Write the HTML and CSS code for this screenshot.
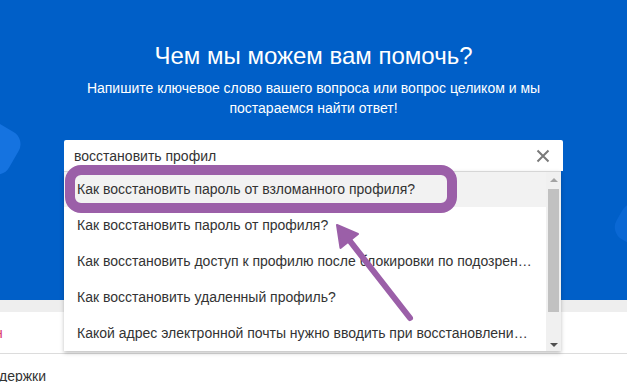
FILE: index.html
```html
<!DOCTYPE html>
<html lang="ru">
<head>
<meta charset="utf-8">
<title>Помощь</title>
<link rel="stylesheet" href="styles.css">
</head>
<body>
<div class="page">
  <section class="hero">
    <span class="blob blob-left"></span>
    <span class="blob blob-right"></span>
    <h1 class="hero-title">Чем мы можем вам помочь?</h1>
    <p class="hero-sub">Напишите ключевое слово вашего вопроса или вопрос целиком и мы<br>постараемся найти ответ!</p>
    <div class="search">
      <div class="search-field">
        <span class="search-text">восстановить профил</span>
        <svg class="search-clear" width="14" height="14" viewBox="0 0 14 14"><path d="M1.5 1.5L12.5 12.5M12.5 1.5L1.5 12.5" stroke="#7a7a7a" stroke-width="2" fill="none"/></svg>
      </div>
      <div class="suggest">
        <ul class="suggest-list">
          <li class="suggest-item active">Как восстановить пароль от взломанного профиля?</li>
          <li class="suggest-item">Как восстановить пароль от профиля?</li>
          <li class="suggest-item">Как восстановить доступ к профилю после блокировки по подозрен…</li>
          <li class="suggest-item">Как восстановить удаленный профиль?</li>
          <li class="suggest-item">Какой адрес электронной почты нужно вводить при восстановлени…</li>
        </ul>
        <div class="scrollbar">
          <span class="sb-arrow sb-up"></span>
          <span class="sb-thumb"></span>
          <span class="sb-arrow sb-down"></span>
        </div>
      </div>
    </div>
  </section>
  <div class="strip"></div>
  <div class="tabs"><span class="tab-active">н</span></div>
  <div class="support">держки</div>
  <svg class="annotation" width="627" height="382" viewBox="0 0 627 382">
    <rect x="70" y="170" width="382" height="38" rx="11" ry="11" fill="none" stroke="#9b5fa8" stroke-width="10"/>
    <line x1="410" y1="318" x2="346" y2="236" stroke="#9b5fa8" stroke-width="6" stroke-linecap="round"/>
    <polygon points="337,225 358,234 340.5,248" fill="#9b5fa8" stroke="#9b5fa8" stroke-width="2" stroke-linejoin="round"/>
  </svg>
</div>
</body>
</html>
```

FILE: styles.css
```css
* { box-sizing: border-box; }
html, body { margin: 0; padding: 0; }
body {
  font-family: "Liberation Sans", Arial, sans-serif;
  background: #ffffff;
  color: #333333;
  width: 627px;
  height: 382px;
  overflow: hidden;
}
.page {
  position: relative;
  width: 627px;
  height: 382px;
  overflow: hidden;
}
.hero {
  position: relative;
  height: 300px;
  background: #005fc8;
  padding-top: 41px;
  text-align: center;
  color: #ffffff;
}
.blob {
  position: absolute;
  background: #1573e0;
  border-radius: 14px;
}
.blob-left {
  left: -30px;
  top: 124px;
  width: 47px;
  height: 47px;
  transform: rotate(30deg);
}
.blob-right {
  left: 617px;
  top: 205px;
  width: 40px;
  height: 40px;
  background: #0a68d4;
  transform: rotate(30deg);
}
.hero-title {
  margin: 0;
  font-size: 24px;
  line-height: 29px;
  font-weight: normal;
}
.hero-sub {
  margin: 8px 0 0;
  font-size: 14px;
  line-height: 20px;
}
.search {
  position: relative;
  width: 499px;
  margin: 22px auto 0;
  text-align: left;
}
.search-field {
  height: 31px;
  background: #ffffff;
  border-radius: 2px 2px 0 0;
  display: flex;
  align-items: center;
  justify-content: space-between;
  padding: 0 13px 0 10px;
}
.search-text {
  font-size: 14px;
  color: #333333;
}
.search-clear { display: block; }
.suggest {
  position: absolute;
  left: 0;
  top: 31px;
  width: 497px;
  height: 180px;
  background: #ffffff;
  border-top: 1px solid #d6d6d6;
  box-shadow: 0 2px 4px rgba(0,0,0,0.25);
  display: flex;
  z-index: 2;
}
.suggest-list {
  list-style: none;
  margin: 0;
  padding: 0;
  flex: 1;
  min-width: 0;
}
.suggest-item {
  height: 36px;
  line-height: 36px;
  padding-left: 13px;
  font-size: 14px;
  color: #333333;
  white-space: nowrap;
  overflow: hidden;
}
.suggest-item:first-child { height: 35px; line-height: 35px; }
.suggest-item.active { background: #f2f2f2; }
.scrollbar {
  width: 15px;
  background: #f0f0f0;
  display: flex;
  flex-direction: column;
  align-items: center;
  padding: 6px 0 4px;
}
.sb-arrow {
  width: 0;
  height: 0;
  border-left: 4px solid transparent;
  border-right: 4px solid transparent;
}
.sb-up { border-bottom: 4px solid #a3a3a3; }
.sb-down { border-top: 4px solid #505050; margin-top: auto; }
.sb-thumb {
  width: 11px;
  height: 123px;
  background: #c1c1c1;
  margin-top: 7px;
}
.strip {
  height: 12px;
  background: #eeeeee;
}
.tabs {
  height: 42px;
  border-bottom: 1px solid #dcdcdc;
  display: flex;
  align-items: center;
  font-size: 14px;
}
.tab-active {
  color: #d83c6e;
  margin-left: -5px;
}
.support {
  font-size: 14px;
  line-height: 16px;
  margin-top: 14px;
  margin-left: -1px;
  color: #333333;
}
.annotation {
  position: absolute;
  left: 0;
  top: 0;
  z-index: 5;
  pointer-events: none;
}
```
